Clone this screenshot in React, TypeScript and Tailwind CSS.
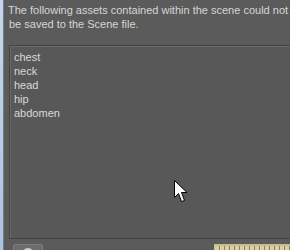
const items = ['chest', 'neck', 'head', 'hip', 'abdomen']

function Cursor() {
  return (
    <svg width="14" height="24" viewBox="0 0 14 24" className="absolute left-[174px] top-[180px]">
      <path d="M0.5 0.5 L0.5 17.5 L4.5 13.5 L7.5 21.5 L10.5 20.5 L7.5 12.5 L13 12.5 Z" fill="#fff" stroke="#000" strokeWidth="1" />
    </svg>
  )
}

export default function App() {
  return (
    <div className="relative w-[290px] h-[250px] overflow-hidden flex bg-[#bcd3ea] font-['Liberation_Sans',Arial,sans-serif]">
      <div className="w-[3px] shrink-0 bg-gradient-to-b from-[#c3d8ee] to-[#a9c4e2]" />
      <div className="flex-1 flex flex-col bg-[#5b5b5b] border-l border-[#7a7a7a]">
        <div className="px-[4px] pt-[3px] text-[11px] leading-[14px] text-[#d6d6d6] whitespace-nowrap">
          <p>The following assets contained within the scene could not</p>
          <p className="pl-[1px]">be saved to the Scene file.</p>
        </div>
        <div className="mt-[14px] ml-[5px] h-[194px] shrink-0 border border-[#434343] bg-[#585858] shadow-[inset_1px_1px_0_#6a6a6a]">
          <ul className="pl-[4px] pt-[4px] text-[11px] leading-[14px] text-[#d8d8d8]">
            {items.map(i => <li key={i}>{i}</li>)}
          </ul>
        </div>
        <div className="mt-[2px] h-px bg-[#474747]" />
        <div className="h-px bg-[#6a6a6a]" />
        <div className="flex justify-between items-start mt-[3px] pl-[9px]">
          <div className="w-[30px] h-[12px] rounded-t-[2px] border border-[#7d7d7d] bg-[#6b6b6b] flex justify-center pt-[3px] overflow-hidden">
            <div className="w-[12px] h-[12px] shrink-0 rounded-full border-2 border-[#cfcfcf]" />
          </div>
          <div className="w-[78px] h-[10px] border-t-2 border-x border-[#c8bd92] bg-[repeating-linear-gradient(90deg,#d9cfa4_0_4px,#8a8060_4px_5px)]" />
        </div>
      </div>
      <Cursor />
    </div>
  )
}
